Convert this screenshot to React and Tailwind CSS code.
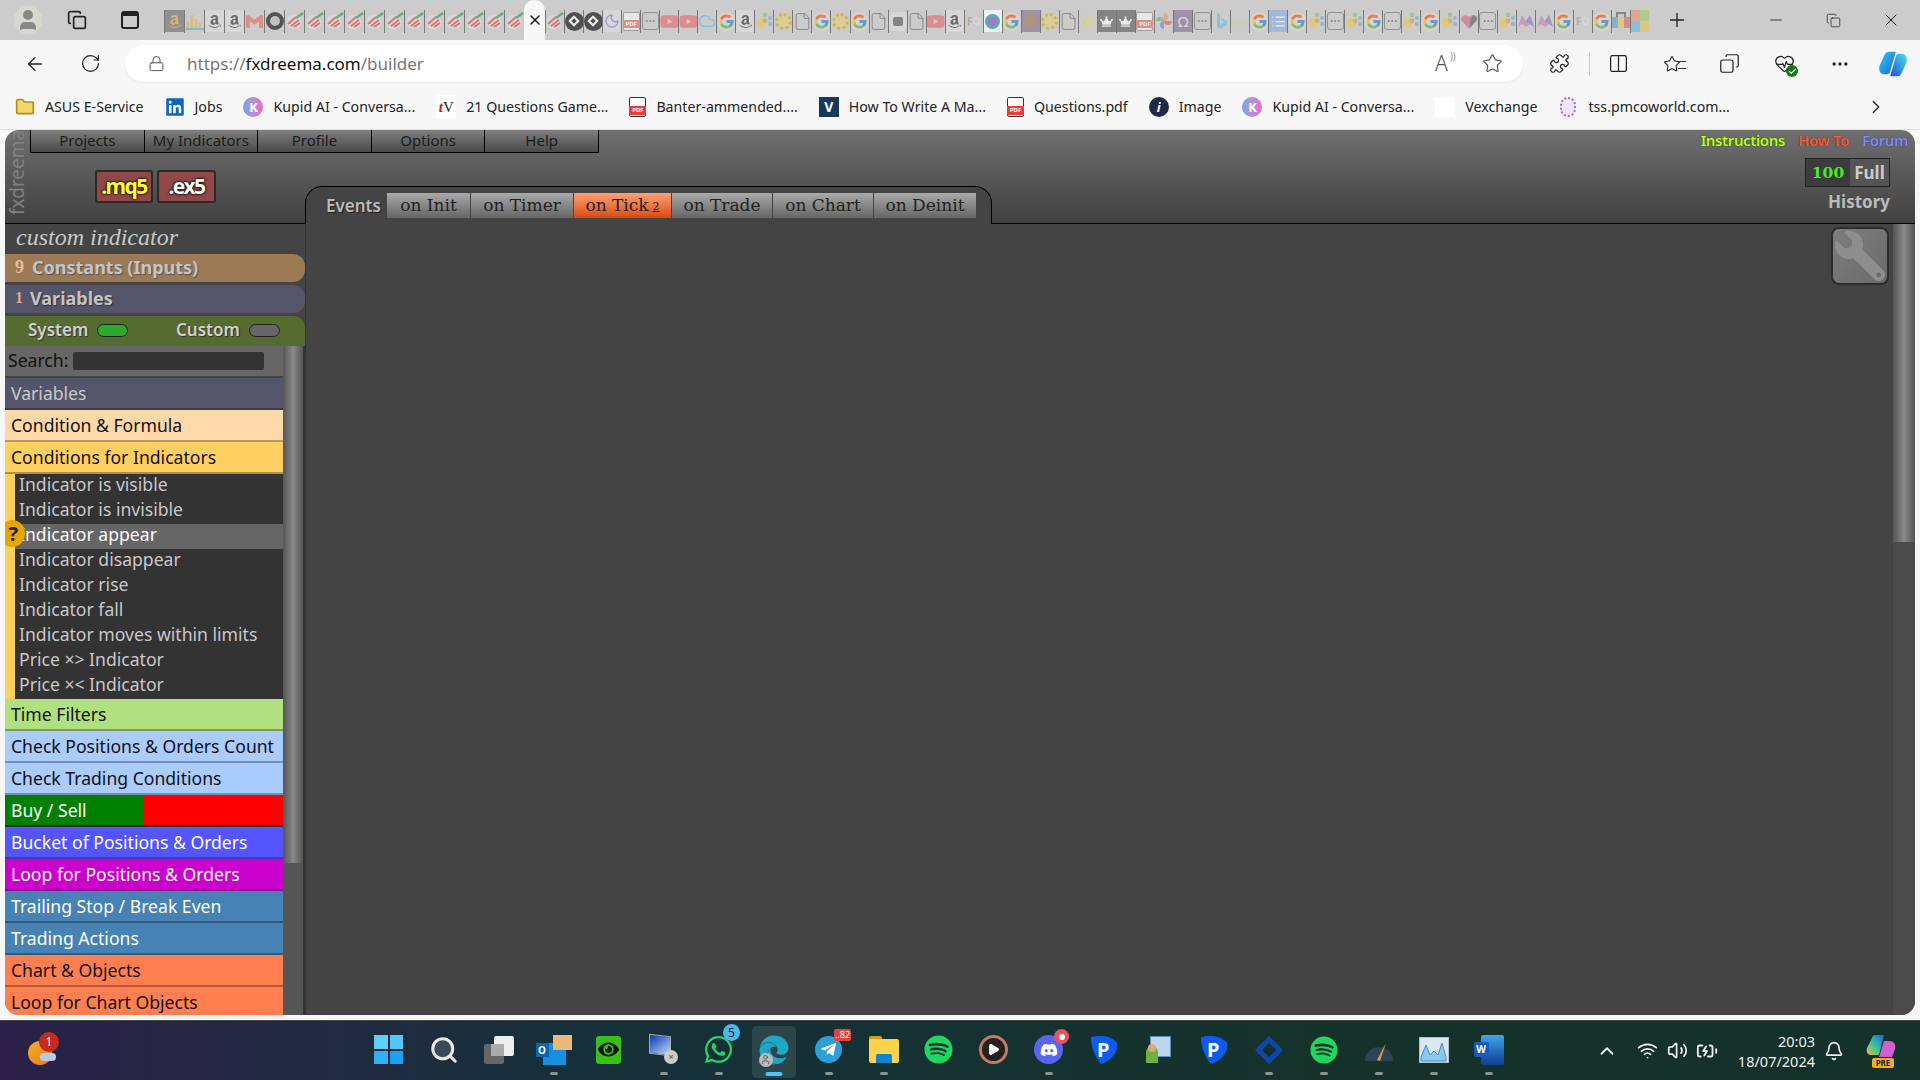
import React from 'react';
import {
  ArrowLeft, RotateCw, Lock, Star, Puzzle, Columns2, HeartPulse, Ellipsis, ChevronRight, ChevronUp,
  Bell, Wifi, Volume2, BatteryCharging, Plus, Minus, X, Copy, Search, File, Cloud, Moon, List, Check, Folder, Play, User,
} from 'lucide-react';
import { FaAmazon, FaYoutube, FaSpotify, FaDiscord, FaWhatsapp, FaTelegramPlane, FaEdge, FaEye, FaWrench, FaCrown, FaLinkedin } from 'react-icons/fa';
import { FcGoogle } from 'react-icons/fc';
import { SiGmail } from 'react-icons/si';

const Bowl = () => (
  <svg viewBox="0 0 18 18" className="w-[18px] h-[18px]">
    <circle cx="8" cy="10" r="7.5" fill="#ddd" />
    <path d="M2 12 L10 5 M5 14 L13 8 M8 15 L14 11" stroke="#e05050" strokeWidth="2" />
    <path d="M10 6 L17 1" stroke="#3aa050" strokeWidth="2.5" />
  </svg>
);

const DocDots = () => (
  <div className="w-[17px] h-[18px] rounded-[3px] border border-[#777] flex items-center justify-center text-[#666]">
    <Ellipsis size={12} />
  </div>
);

const Pdf = () => (
  <div className="relative w-[17px] h-[19px] bg-white/80 border border-[#888] rounded-[2px]">
    <div className="absolute left-[-1px] right-[-1px] top-[7px] h-[8px] bg-[#e57373] text-white text-[6px] leading-[8px] font-bold text-center">PDF</div>
  </div>
);

const Paws = () => (
  <svg viewBox="0 0 18 18" className="w-[18px] h-[18px]">
    <circle cx="10" cy="3" r="2.4" fill="#8bc48a" />
    <circle cx="15" cy="6" r="2" fill="#7fb0e0" />
    <circle cx="15" cy="12" r="2.2" fill="#7fb0e0" />
    <ellipse cx="6" cy="11" rx="4" ry="5.5" fill="#e6c860" />
    <circle cx="10" cy="9" r="2.4" fill="#e0a050" />
  </svg>
);

const Letter = ({ children, cls }) => <div className={cls}>{children}</div>;

const favs = {
  amz: <div className="w-[19px] h-[22px] bg-[#777] text-[#e6a550] flex items-center justify-center"><FaAmazon size={15} /></div>,
  bars: <svg viewBox="0 0 18 18" className="w-[18px] h-[18px]"><path d="M2 17V9M6 17V3M10 17V7M14 17V11" stroke="#e0b850" strokeWidth="2.5" /><path d="M0 17H18" stroke="#60b0e0" strokeWidth="2" /></svg>,
  a: <div className="w-[19px] h-[22px] bg-[#ddd] text-[#444] flex items-center justify-center"><FaAmazon size={15} /></div>,
  gmail: <SiGmail size={17} className="text-[#e57368]" />,
  o: <div className="w-[18px] h-[18px] rounded-full border-[4px] border-[#222] bg-[#bbb]" />,
  bowl: <Bowl />,
  dia: <div className="w-[19px] h-[19px] rounded-full bg-[#1c1c1c] flex items-center justify-center"><div className="w-[8px] h-[8px] rotate-45 border-2 border-white" /></div>,
  moon: <div className="w-[19px] h-[22px] bg-[#ddd] flex items-center justify-center text-[#9080c8]"><Moon size={16} /></div>,
  pdf: <Pdf />,
  dots: <DocDots />,
  yt: <FaYoutube size={19} className="text-[#e57373]" />,
  cloud: <Cloud size={18} className="text-[#70b8e8]" />,
  g: <div className="w-[19px] h-[19px] rounded-full bg-[#ddd] flex items-center justify-center opacity-80"><FcGoogle size={17} /></div>,
  paws: <Paws />,
  gold: <div className="w-[17px] h-[17px] rounded-full border-[3px] border-dotted border-[#c8a840] bg-[#e0d080]" />,
  doc: <File size={19} strokeWidth={1.2} className="text-[#666]" />,
  pill: <div className="w-[19px] h-[19px] rounded-[5px] bg-[#ddd] flex items-center justify-center"><div className="w-[10px] h-[9px] rounded-[2px] bg-[#666]" /></div>,
  fo: <Letter cls="text-[10px] font-bold text-[#b89878] leading-none">F<span className="text-[#ddd]">O</span></Letter>,
  chat: <div className="w-[19px] h-[22px] bg-white flex items-center justify-center"><div className="w-[15px] h-[15px] rounded-full border-[3px] border-[#20a0b0] bg-[#a050c0]" /></div>,
  monkey: <div className="w-[19px] h-[22px] bg-[#8a7a9a] flex items-center justify-center"><div className="w-[13px] h-[14px] rounded-full bg-[#a08060]" /></div>,
  ay: <Letter cls="text-[17px] font-bold italic text-[#d8d870] leading-none">A</Letter>,
  crown: <div className="w-[19px] h-[22px] bg-[#666] flex items-center justify-center text-white"><FaCrown size={13} /></div>,
  pin: <svg viewBox="0 0 18 18" className="w-[18px] h-[18px]"><path d="M9 9V1a4 4 0 0 1 0 8Z" fill="#e8a060" /><path d="M9 9h8a4 4 0 0 1-8 0Z" fill="#e06868" /><path d="M9 9v8a4 4 0 0 1 0-8Z" fill="#7090d8" /><path d="M9 9H1a4 4 0 0 1 8 0Z" fill="#70b880" /></svg>,
  omega: <Letter cls="w-[19px] h-[22px] bg-[#8a7a9a] text-[#ddd] text-[15px] leading-[22px] text-center">Ω</Letter>,
  bing: <svg viewBox="0 0 18 18" className="w-[18px] h-[18px]"><path d="M5 1l3 1v11l5-3-3-1-1-3 6 3v4l-7 4-3-2Z" fill="#70c0e8" /></svg>,
  app: <Letter cls="text-[7px] text-[#b8d890] leading-none">appp</Letter>,
  list: <div className="w-[19px] h-[22px] bg-[#90b0e0] flex items-center justify-center text-white"><List size={15} /></div>,
  heart: <svg viewBox="0 0 18 18" className="w-[18px] h-[18px]"><path d="M9 17 1 8a4.5 4.5 0 0 1 8-3 4.5 4.5 0 0 1 8 3Z" fill="#d87090" /><path d="M10 16 17 8a4 4 0 0 0-4-5l-3 5Z" fill="#666" /></svg>,
  m: <svg viewBox="0 0 18 18" className="w-[18px] h-[18px]"><path d="M1 15 5 3l4 6 4-6 4 12-4-3-4 3-4-3Z" fill="#c88ab0" /><path d="M9 9l4-6 4 12-4-3Z" fill="#9080c0" /></svg>,
  bag: <svg viewBox="0 0 18 22" className="w-[18px] h-[22px]"><path d="M5 7V3h8v4" fill="none" stroke="#666" strokeWidth="2" /><rect x="0" y="7" width="6" height="11" fill="#70a0d0" /><rect x="6" y="7" width="6" height="11" fill="#e0c860" /><rect x="12" y="7" width="6" height="11" fill="#d87070" /></svg>,
  ms: <div className="grid grid-cols-2 w-[19px] h-[22px]"><div className="bg-[#e89878]" /><div className="bg-[#a8c878]" /><div className="bg-[#70b8e0]" /><div className="bg-[#e0c860]" /></div>,
};

const leftTabs = ['amz', 'bars', 'a', 'a', 'gmail', 'o', 'bowl', 'bowl', 'bowl', 'bowl', 'bowl', 'bowl', 'bowl', 'bowl', 'bowl', 'bowl', 'bowl', 'bowl'];
const rightTabs = [
  'bowl', 'dia', 'dia', 'moon', 'pdf', 'dots', 'yt', 'yt', 'cloud', 'g', 'a', 'paws', 'gold', 'doc', 'g', 'gold', 'g', 'doc', 'pill', 'doc', 'yt', 'a', 'fo', 'chat', 'g',
  'monkey', 'gold', 'doc', 'ay', 'crown', 'crown', 'pdf', 'pin', 'omega', 'dots', 'bing', 'app', 'g', 'list', 'g', 'paws', 'dots', 'paws', 'g', 'dots', 'paws', 'g', 'paws',
  'heart', 'dots', 'paws', 'm', 'm', 'g', 'fo', 'g', 'bag', 'ms',
];

const Tab = ({ k }) => (
  <div className="flex-1 min-w-0 h-[23px] border-l border-[#777] flex items-center justify-center overflow-hidden">
    <div className="opacity-70 flex items-center justify-center shrink-0">{favs[k]}</div>
  </div>
);

const PdfMark = () => (
  <div className="relative w-[17px] h-[20px] bg-white border border-[#333] rounded-[2px]">
    <div className="absolute left-[-1px] right-[-1px] top-[8px] h-[9px] bg-[#f03a3a] text-white text-[6px] leading-[9px] font-bold text-center">PDF</div>
  </div>
);

const KMark = () => (
  <div className="w-[20px] h-[20px] rounded-full bg-linear-to-r from-[#6aa8e8] to-[#e868c8] text-white text-[13px] font-bold leading-[20px] text-center">K</div>
);

const bookmarks = [
  { label: 'ASUS E-Service', icon: <Folder size={20} fill="#f4d66c" className="text-[#b58a1a]" /> },
  { label: 'Jobs', icon: <FaLinkedin size={20} className="text-[#0a66c2]" /> },
  { label: 'Kupid AI - Conversa...', icon: <KMark /> },
  { label: '21 Questions Game...', icon: <div className="w-[20px] h-[24px] bg-white text-[15px] leading-[24px] font-['Liberation_Serif',serif] text-center"><span className="text-[#e01010] font-bold italic">t</span>V</div> },
  { label: 'Banter-ammended....', icon: <PdfMark /> },
  { label: 'How To Write A Ma...', icon: <div className="w-[20px] h-[20px] bg-[#15395b] text-white text-[14px] leading-[20px] font-bold text-center">V</div> },
  { label: 'Questions.pdf', icon: <PdfMark /> },
  { label: 'Image', icon: <div className="w-[20px] h-[20px] rounded-full bg-[#1f2a4a] text-white text-[13px] leading-[20px] font-bold italic text-center">i</div> },
  { label: 'Kupid AI - Conversa...', icon: <KMark /> },
  { label: 'Vexchange', icon: <div className="w-[20px] h-[20px] bg-white" /> },
  { label: 'tss.pmcoworld.com...', icon: <div className="w-[16px] h-[20px] mx-[2px] rounded-full border-2 border-dotted border-[#9a70d0] bg-[#efe6fa]" /> },
];

const menu = ['Projects', 'My Indicators', 'Profile', 'Options', 'Help'];

const tabs = [
  { label: 'on Init', cls: 'w-[83px] bg-linear-to-b from-[#aaa] to-[#666]' },
  { label: 'on Timer', cls: 'w-[102px] bg-linear-to-b from-[#aaa] to-[#666]' },
  { label: 'on Tick', cls: 'w-[97px] bg-linear-to-b from-[#ffa070] to-[#d84808]', sub: '2' },
  { label: 'on Trade', cls: 'w-[100px] bg-linear-to-b from-[#aaa] to-[#666]' },
  { label: 'on Chart', cls: 'w-[100px] bg-linear-to-b from-[#aaa] to-[#666]' },
  { label: 'on Deinit', cls: 'w-[102px] bg-linear-to-b from-[#aaa] to-[#666]' },
];

const subItems = [
  'Indicator is visible', 'Indicator is invisible', 'Indicator appear', 'Indicator disappear', 'Indicator rise',
  'Indicator fall', 'Indicator moves within limits', 'Price ×> Indicator', 'Price ×< Indicator',
];

const Row = ({ cls, children }) => (
  <div className={`h-[32px] shrink-0 pl-[6px] flex items-center border-b-2 border-black/30 ${cls}`}>{children}</div>
);

const Toggle = ({ cls }) => <div className={`w-[31px] h-[13px] rounded-full border border-[#222] ${cls}`} />;

const Sidebar = () => (
  <div className="w-[300px] shrink-0 flex flex-col bg-[#444]">
    <div className="h-[30px] shrink-0 pl-[11px] pb-[5px] flex items-center font-['Liberation_Serif',serif] italic text-[24px] text-[#c8c8c8]">custom indicator</div>
    <div className="h-[28px] shrink-0 pb-[2px] rounded-r-[12px] bg-[#9b7a55] pl-[10px] flex items-center gap-[8px]">
      <span className="font-['Liberation_Serif',serif] font-bold text-[18px] text-[#e8bd90]">9</span>
      <span className="font-bold text-[18px] text-[#c4c4c4] [text-shadow:1px_1px_1px_#555]">Constants (Inputs)</span>
    </div>
    <div className="h-[28px] shrink-0 pb-[2px] mt-[3px] rounded-r-[12px] bg-[#55556a] pl-[10px] flex items-center gap-[7px]">
      <span className="font-['Liberation_Serif',serif] font-bold text-[16px] text-[#e0a888]">1</span>
      <span className="font-bold text-[18px] text-[#c4c4c4] [text-shadow:1px_1px_1px_#333]">Variables</span>
    </div>
    <div className="h-[30px] shrink-0 mt-[3px] pb-[2px] rounded-tr-[12px] bg-[#556b30] flex items-center pl-[23px] font-semibold text-[17px] text-[#d0d0d0] [text-shadow:1px_1px_1px_#333]">
      <span className="w-[69px]">System</span>
      <Toggle cls="bg-[#2aaa2a]" />
      <span className="ml-[48px] w-[73px]">Custom</span>
      <Toggle cls="bg-[#666]" />
    </div>
    <div className="flex flex-1 min-h-0">
      <div className="w-[278px] shrink-0 flex flex-col overflow-hidden text-[17.6px]">
        <div className="h-[32px] shrink-0 bg-[#666] pl-[3px] pb-[1px] flex items-center gap-[5px] text-[#111] border-b-2 border-[#444]">
          <span>Search:</span>
          <div className="w-[191px] h-[18px] rounded-[2px] bg-[#333]" />
        </div>
        <Row cls="bg-[#55556a] text-[#c8c8c8] pl-[6px]">Variables</Row>
        <Row cls="bg-[#ffd8a8] text-[#111]">Condition &amp; Formula</Row>
        <Row cls="bg-[#ffd060] text-[#111]">Conditions for Indicators</Row>
        <div className="shrink-0 bg-[#ffd060] pl-[10px]">
          {subItems.map((item, i) => (
            <div
              key={item}
              className={`relative h-[25px] pl-[4px] pb-[5px] flex items-center ${i === 2 ? 'bg-[#666] text-white' : 'bg-[#333] text-[#c8c8c8]'}`}
            >
              {item}
              {i === 2 && (
                <div className="absolute -left-[16px] top-[-4px] w-[26px] h-[27px] rounded-full bg-[#e8a500] text-[#222] text-[20px] font-bold leading-[27px] text-right pr-[7px]">?</div>
              )}
            </div>
          ))}
        </div>
        <Row cls="bg-[#b0e080] text-[#111]">Time Filters</Row>
        <Row cls="bg-[#aaccff] text-[#111]">Check Positions &amp; Orders Count</Row>
        <Row cls="bg-[#aaccff] text-[#111]">Check Trading Conditions</Row>
        <div className="h-[32px] shrink-0 flex border-b-2 border-black/30 text-white">
          <div className="w-[139px] bg-[#008000] pl-[6px] flex items-center">Buy / Sell</div>
          <div className="flex-1 bg-[#ff0000]" />
        </div>
        <Row cls="bg-[#5555ff] text-white">Bucket of Positions &amp; Orders</Row>
        <Row cls="bg-[#cc00cc] text-white">Loop for Positions &amp; Orders</Row>
        <Row cls="bg-[#4682b4] text-white">Trailing Stop / Break Even</Row>
        <Row cls="bg-[#4682b4] text-white">Trading Actions</Row>
        <Row cls="bg-[#ff7f50] text-[#111]">Chart &amp; Objects</Row>
        <Row cls="bg-[#ff7f50] text-[#111]">Loop for Chart Objects</Row>
      </div>
      <div className="w-[22px] shrink-0 flex flex-col border-r-2 border-[#333] bg-[#555]">
        <div className="h-[517px] bg-linear-to-r from-[#555] via-[#8a8a8a] to-[#555]" />
      </div>
    </div>
  </div>
);

const Header = () => (
  <div className="h-[94px] shrink-0 flex bg-linear-to-b from-[#707070] to-[#404040]">
    <div className="w-[25px] shrink-0 border-b border-black flex justify-center">
      <span className="[writing-mode:vertical-rl] rotate-180 text-[19px] leading-none text-[#808080] h-[85px]">fxdreema</span>
    </div>
    <div className="flex-1 min-w-0 flex flex-col">
      <div className="h-[23px] shrink-0 flex justify-between">
        <div className="flex border-l border-black">
          {menu.map((m) => (
            <div key={m} className="w-[113.6px] pb-[1px] flex items-center justify-center border-r border-b border-black bg-linear-to-b from-[#808080] to-[#4a4a4a] text-[15px] text-[#1c1c1c]">{m}</div>
          ))}
        </div>
        <div className="flex items-center gap-[13px] pr-[7px] pb-[3px] text-[15px] font-semibold tracking-tight [text-shadow:0_0_1px_#222]">
          <span className="text-[#bbff11]">Instructions</span>
          <span className="text-[#ff5533]">How To</span>
          <span className="text-[#8888ff]">Forum</span>
        </div>
      </div>
      <div className="flex flex-1 min-h-0">
        <div className="w-[275px] shrink-0 border-b border-black pl-[65px] pt-[17px] flex gap-[4px] items-start">
          <div className="w-[58px] h-[33px] rounded-[3px] border-2 border-[#2a2a2a] bg-[#904848] flex items-center justify-center font-bold text-[21px] tracking-[-1.5px] text-[#ffff30] [text-shadow:0_0_2px_#000,0_0_3px_#000]">.mq5</div>
          <div className="w-[59px] h-[33px] rounded-[3px] border-2 border-[#2a2a2a] bg-[#904848] flex items-center justify-center font-bold text-[21px] tracking-[-1.5px] text-white [text-shadow:0_0_2px_#000,0_0_3px_#000]">.ex5</div>
        </div>
        <div className="w-[687px] shrink-0 mt-[33px] rounded-t-[17px] border-t border-x border-black bg-[#444] pl-[20px] pt-[6px] flex items-start">
          <span className="w-[61px] h-[25px] flex items-center font-semibold text-[17px] text-[#bbb] [text-shadow:1px_1px_1px_#222]">Events</span>
          <div className="flex gap-px">
            {tabs.map((t) => (
              <div key={t.label} className={`${t.cls} h-[25px] flex items-center justify-center font-['DejaVu_Serif',serif] text-[17px] text-[#222]`}>
                {t.label}
                {t.sub && <span className="text-[11px] underline ml-[4px] mt-[4px]">{t.sub}</span>}
              </div>
            ))}
          </div>
        </div>
        <div className="flex-1 border-b border-black pr-[25px] pt-[5px] flex flex-col items-end">
          <div className="flex h-[29px] w-[85px] border border-[#222] text-[17px] font-bold">
            <span className="w-[44px] bg-[#3c3c3c] text-[#44ee22] font-['DejaVu_Serif',serif] text-[15.5px] flex items-center justify-center">100</span>
            <span className="flex-1 bg-[#555] text-[#ccc] flex items-center justify-center">Full</span>
          </div>
          <span className="mt-[2px] text-[17px] font-bold text-[#bbb]">History</span>
        </div>
      </div>
    </div>
  </div>
);

const Canvas = () => (
  <div className="flex-1 min-w-0 flex justify-end bg-[#444] border-l border-[#333]">
    <div className="pt-[3px] pr-[4px]">
      <div className="w-[58px] h-[58px] rounded-[8px] border-2 border-[#2c2c2c] bg-linear-to-br from-[#7e7e7e] to-[#6a6a6a] flex items-center justify-center text-[#8e8e8e]">
        <FaWrench size={50} className="-scale-x-100" />
      </div>
    </div>
    <div className="w-[22px] shrink-0 flex flex-col bg-[#4b4b4b]">
      <div className="h-[318px] bg-linear-to-r from-[#555] via-[#8a8a8a] to-[#555]" />
    </div>
  </div>
);

const CopilotLogo = ({ id, size }) => (
  <svg viewBox="0 0 32 32" width={size} height={size}>
    <defs>
      <linearGradient id={`${id}a`} x1="0" y1="0" x2="1" y2="1"><stop offset="0" stopColor="#37c6f4" /><stop offset="1" stopColor="#0e6fd8" /></linearGradient>
      <linearGradient id={`${id}b`} x1="0" y1="1" x2="1" y2="0"><stop offset="0" stopColor="#1d4fd8" /><stop offset="1" stopColor="#4de0e8" /></linearGradient>
    </defs>
    <path d="M12 3h7l-6 21a4 4 0 0 1-4 3H7C2 27 0 22 2 17L7 6a5 5 0 0 1 5-3Z" fill={`url(#${id}a)`} />
    <path d="M20 29h-7l6-21a4 4 0 0 1 4-3h2c5 0 7 5 5 10l-5 11a5 5 0 0 1-5 3Z" fill={`url(#${id}b)`} />
  </svg>
);

const Dot = () => <div className="absolute bottom-[5px] left-1/2 -translate-x-1/2 w-[8px] h-[3px] rounded-full bg-[#8a9490]" />;

const Badge = ({ cls, children }) => <div className={`absolute flex items-center justify-center font-bold ${cls}`}>{children}</div>;

const PMark = () => (
  <svg viewBox="0 0 30 30" width="30" height="30">
    <path d="M2 2 C10 0 22 0 28 8 C30 16 22 26 12 29 C6 22 2 12 2 2Z" fill="#0d5cf0" />
    <text x="8" y="22" fontSize="20" fontWeight="700" fill="#fff" fontFamily="Noto Sans">P</text>
  </svg>
);

const taskIcons = [
  { key: 'win', el: <div className="grid grid-cols-2 gap-[2px] w-[29px] h-[29px]"><div className="bg-[#5fd0fb]" /><div className="bg-[#52c8fa]" /><div className="bg-[#2fb0f8]" /><div className="bg-[#1ba0f5]" /></div> },
  { key: 'search', el: <Search size={30} strokeWidth={2.4} className="text-[#e8e8e8] fill-[#3a4a5a]" /> },
  { key: 'view', el: <div className="relative w-[30px] h-[28px]"><div className="absolute left-0 bottom-0 w-[20px] h-[20px] bg-[#666] rounded-[2px]" /><div className="absolute right-0 top-0 w-[20px] h-[20px] bg-[#eee] rounded-[2px]" /><div className="absolute left-[7px] top-[8px] w-[13px] h-[12px] bg-[#aaa]" /></div> },
  { key: 'outlook', dot: true, el: <div className="relative w-[36px] h-[30px]"><div className="absolute left-[7px] bottom-0 w-[23px] h-[22px] bg-[#1490df]" /><div className="absolute left-0 top-[8px] w-[13px] h-[14px] bg-[#0a64b4] text-white text-[10px] font-bold leading-[14px] text-center">O</div><div className="absolute right-0 top-0 w-[19px] h-[15px] bg-[#eab878]" /></div> },
  { key: 'eye', el: <div className="w-[25px] h-[28px] rounded-[3px] bg-[#38c018] flex items-center justify-center text-[#111]"><FaEye size={21} /></div> },
  { key: 'remote', dot: true, el: <div className="relative w-[29px] h-[29px]"><div className="absolute left-0 top-0 w-[22px] h-[20px] bg-linear-to-br from-[#1030b0] to-[#c8d8f0] border border-[#aaa] skew-y-6" /><div className="absolute right-0 bottom-0 w-[14px] h-[14px] rounded-full bg-[#ccc] text-[#2a8a2a] text-[9px] font-bold leading-[14px] text-center">×</div></div> },
  { key: 'wa', dot: true, el: <div className="relative"><FaWhatsapp size={31} className="text-[#25d366]" /><Badge cls="-top-[10px] -right-[6px] w-[17px] h-[17px] rounded-full bg-[#4cb8f0] text-[#111] text-[12px] font-normal">5</Badge></div> },
  { key: 'edge', active: true, el: <div className="relative"><FaEdge size={30} className="text-[#1ea8c8]" /><div className="absolute left-0 bottom-[-2px] w-[14px] h-[14px] rounded-full bg-[#bbb] flex items-center justify-center text-[#555]"><User size={11} /></div></div> },
  { key: 'tg', dot: true, el: <div className="relative w-[27px] h-[27px] rounded-full bg-[#2a9fd8] flex items-center justify-center text-white"><FaTelegramPlane size={17} /><Badge cls="-top-[7px] -right-[9px] w-[17px] h-[12px] rounded-[2px] bg-[#e84040] text-white text-[9px] font-normal">..82</Badge></div> },
  { key: 'folder', dot: true, el: <div className="relative w-[30px] h-[27px]"><div className="absolute left-0 top-0 w-[13px] h-[6px] rounded-t-[2px] bg-[#d8a010]" /><div className="absolute left-0 right-0 top-[3px] bottom-0 rounded-[2px] bg-[#fbd44c]" /><div className="absolute left-[7px] right-[7px] bottom-0 h-[9px] rounded-t-[2px] bg-[#1080d0]" /></div> },
  { key: 'sp1', el: <FaSpotify size={29} className="text-[#1ed760]" /> },
  { key: 'play', el: <div className="w-[29px] h-[29px] rounded-full border-[3px] border-[#c87a60] bg-[#222] flex items-center justify-center"><Play size={13} className="text-white fill-white" /></div> },
  { key: 'discord', dot: true, el: <div className="relative w-[29px] h-[29px] rounded-full bg-[#5865f2] flex items-center justify-center text-white"><FaDiscord size={18} /><Badge cls="-top-[6px] -right-[6px] w-[15px] h-[15px] rounded-full bg-[#e85060]"><span className="w-[6px] h-[6px] rounded-full bg-white" /></Badge></div> },
  { key: 'p1', el: <PMark /> },
  { key: 'group', el: <div className="relative w-[25px] h-[27px]"><div className="absolute right-0 top-0 w-[21px] h-[21px] bg-[#bcd4ec] border border-[#5a90c8]" /><div className="absolute left-0 bottom-0 w-[12px] h-[17px] rounded-t-full bg-[#70b040]" /><div className="absolute left-[2px] bottom-[11px] w-[8px] h-[8px] rounded-full bg-[#e0a870]" /></div> },
  { key: 'p2', el: <PMark /> },
  { key: 'dia', dot: true, el: <div className="w-[20px] h-[20px] rotate-45 border-[5px] border-[#0d47a8] bg-[#15302c]" /> },
  { key: 'sp2', dot: true, el: <FaSpotify size={28} className="text-[#1ed760]" /> },
  { key: 'gauge', dot: true, el: <svg viewBox="0 0 30 26" width="30" height="26"><path d="M1 24a14 14 0 1 1 28 0Z" fill="#2e4258" /><path d="M13 23 22 6 16 24Z" fill="#e0a030" /></svg> },
  { key: 'chart', dot: true, el: <svg viewBox="0 0 30 26" width="30" height="26"><rect width="30" height="26" fill="#dbe8f2" stroke="#8899a6" /><path d="M2 24V20L7 8 11 18 15 14 19 18 23 6 27 20V24Z" fill="#8cc8ec" stroke="#3a90cc" /></svg> },
  { key: 'word', dot: true, el: <div className="relative w-[30px] h-[30px]"><div className="absolute right-0 top-0 w-[23px] h-[30px] rounded-[2px] bg-linear-to-b from-[#41a5ee] to-[#103f91]" /><div className="absolute left-0 top-[7px] w-[15px] h-[15px] rounded-[2px] bg-[#185abd] text-white text-[10px] font-bold leading-[15px] text-center">W</div></div> },
];

const Taskbar = () => (
  <div className="h-[60px] shrink-0 border-t border-[#444] bg-linear-to-r from-[#2b2049] via-[#15303a] via-30% to-[#15322a] to-70% flex items-center">
    <div className="w-[361px] shrink-0 pl-[28px]">
      <div className="relative w-[28px] h-[24px] mt-[4px]">
        <div className="w-[24px] h-[24px] rounded-full bg-linear-to-br from-[#f0b020] to-[#e87a20]" />
        <div className="absolute right-0 bottom-[4px] w-[16px] h-[8px] rounded-full bg-[#b8cce8]" />
        <Badge cls="-top-[9px] left-[11px] w-[20px] h-[20px] rounded-full bg-[#c42b1c] text-white text-[12px] font-normal">1</Badge>
      </div>
    </div>
    <div className="flex h-full">
      {taskIcons.map((t) => (
        <div key={t.key} className="relative w-[55px] h-full flex items-center justify-center">
          {t.active && <div className="absolute left-[6px] right-[5px] top-[5px] bottom-[2px] rounded-[5px] bg-white/10" />}
          <div className="relative -mt-[2px]">{t.el}</div>
          {t.dot && <Dot />}
          {t.active && <div className="absolute bottom-[4px] left-1/2 -translate-x-1/2 w-[17px] h-[4px] rounded-full bg-[#4cc2ff]" />}
        </div>
      ))}
    </div>
    <div className="flex-1 flex items-center justify-end text-[#f0f0f0]">
      <ChevronUp size={22} />
      <Wifi size={21} className="ml-[19px]" />
      <Volume2 size={21} className="ml-[9px]" />
      <BatteryCharging size={22} className="ml-[8px]" />
      <div className="ml-[20px] text-right text-[14.5px] leading-[20px]">
        <div>20:03</div>
        <div>18/07/2024</div>
      </div>
      <Bell size={20} className="ml-[9px]" />
      <div className="relative ml-[22px] mr-[24px] w-[30px] h-[30px] -mt-[3px]">
        <svg viewBox="0 0 30 30" width="30" height="30">
          <defs><linearGradient id="pre" x1="0" y1="1" x2="1" y2="0"><stop offset="0" stopColor="#f0c030" /><stop offset="0.5" stopColor="#30c0a0" /><stop offset="1" stopColor="#2060e0" /></linearGradient></defs>
          <path d="M10 1h8l-5 20H5C1 21 0 17 1 14L6 4a4 4 0 0 1 4-3Z" fill="url(#pre)" />
          <path d="M18 7h6c4 0 6 4 5 8l-3 8H13Z" fill="#d060d0" />
        </svg>
        <div className="absolute left-[6px] -bottom-[4px] w-[22px] h-[10px] rounded-[2px] bg-[#f0b020] text-[#222] text-[8px] font-bold leading-[10px] text-center">PRE</div>
      </div>
    </div>
  </div>
);

const App = () => (
  <div className="w-[1920px] h-screen overflow-hidden flex flex-col bg-[#f7f7f7] font-['Noto_Sans',sans-serif]">
    {/* browser tab strip */}
    <div className="h-[40px] shrink-0 bg-[#cccccc] flex items-center">
      <div className="w-[164px] shrink-0 flex items-center pl-[14px] text-[#222]">
        <div className="w-[28px] h-[28px] rounded-full bg-[#d8d8d0] flex items-center justify-center text-[#888]"><User size={24} fill="#888" /></div>
        <Copy size={20} className="ml-[25px]" />
        <div className="ml-[34px] w-[18px] h-[18px] rounded-[3px] border-2 border-[#222] border-t-[5px]" />
      </div>
      <div className="w-[360px] shrink-0 flex pt-[2px]">
        {leftTabs.map((k, i) => <Tab key={i} k={k} />)}
      </div>
      <div className="w-[21px] h-[40px] shrink-0 rounded-t-[10px] bg-[#f7f7f7] flex items-center justify-center"><X size={16} className="text-[#111]" /></div>
      <div className="w-[1104px] shrink-0 flex pt-[2px]">
        {rightTabs.map((k, i) => <Tab key={i} k={k} />)}
      </div>
      <Plus size={22} strokeWidth={1.5} className="ml-[17px] text-[#222]" />
      <Minus size={18} strokeWidth={1.2} className="ml-[79px] text-[#222]" />
      <Copy size={15} strokeWidth={1.2} className="ml-[41px] text-[#222]" />
      <X size={20} strokeWidth={1.2} className="ml-[40px] text-[#222]" />
    </div>

    {/* address bar */}
    <div className="h-[45px] shrink-0 pt-[5px] flex items-start text-[#222]">
      <div className="w-[125px] h-[37px] shrink-0 flex items-center pl-[24px]">
        <ArrowLeft size={22} strokeWidth={1.4} />
        <RotateCw size={21} strokeWidth={1.4} className="ml-[34px]" />
      </div>
      <div className="w-[1398px] h-[37px] shrink-0 rounded-full bg-white shadow-[0_1px_2px_#0001] flex items-center pl-[23px] text-[#555]">
        <Lock size={17} strokeWidth={1.4} />
        <div className="ml-[22px] text-[17px] text-[#777]">https://<span className="text-[#111]">fxdreema.com</span>/builder</div>
        <div className="ml-auto relative w-[26px] text-[21px] font-light leading-none text-[#555] mr-[21px]">A<span className="absolute left-[15px] -top-[2px] text-[10px]">))</span></div>
        <Star size={21} strokeWidth={1.3} className="mr-[20px]" />
      </div>
      <div className="flex items-center h-[37px]">
        <div className="w-[66px] flex justify-end"><Puzzle size={21} strokeWidth={1.4} className="mr-[19px]" /></div>
        <div className="w-px h-[24px] bg-[#ccc] mr-[18px]" />
        <Columns2 size={21} strokeWidth={1.4} />
        <div className="relative ml-[34px]"><Star size={18} strokeWidth={1.4} /><div className="absolute left-[15px] top-[6px] w-[8px] h-[8px] border-y border-[#333]" /></div>
        <div className="relative ml-[38px]"><Copy size={21} strokeWidth={1.4} className="-scale-x-100" /></div>
        <div className="relative ml-[34px]">
          <HeartPulse size={21} strokeWidth={1.4} />
          <div className="absolute -right-[3px] -bottom-[3px] w-[12px] h-[12px] rounded-full bg-[#107c10] flex items-center justify-center text-white"><Check size={9} strokeWidth={3} /></div>
        </div>
        <Ellipsis size={20} className="ml-[35px]" />
        <div className="ml-[28px]"><CopilotLogo id="cp" size={30} /></div>
      </div>
    </div>

    {/* bookmarks */}
    <div className="h-[45px] shrink-0 border-b border-[#e0e0e0] flex items-center pl-[15px] text-[14.2px] text-[#222]">
      <div className="flex items-center gap-[21px]">
        {bookmarks.map((b, i) => (
          <div key={i} className="flex items-center gap-[10px]">
            {b.icon}
            <span className="whitespace-nowrap">{b.label}</span>
          </div>
        ))}
      </div>
      <ChevronRight size={22} strokeWidth={1.4} className="ml-auto mr-[33px]" />
    </div>

    {/* the page */}
    <div className="flex-1 min-h-0 px-[5px] pb-[5px]">
      <div className="h-full rounded-[14px] overflow-hidden flex flex-col">
        <Header />
        <div className="flex flex-1 min-h-0">
          <Sidebar />
          <Canvas />
        </div>
      </div>
    </div>

    <Taskbar />
  </div>
);

export default App;
